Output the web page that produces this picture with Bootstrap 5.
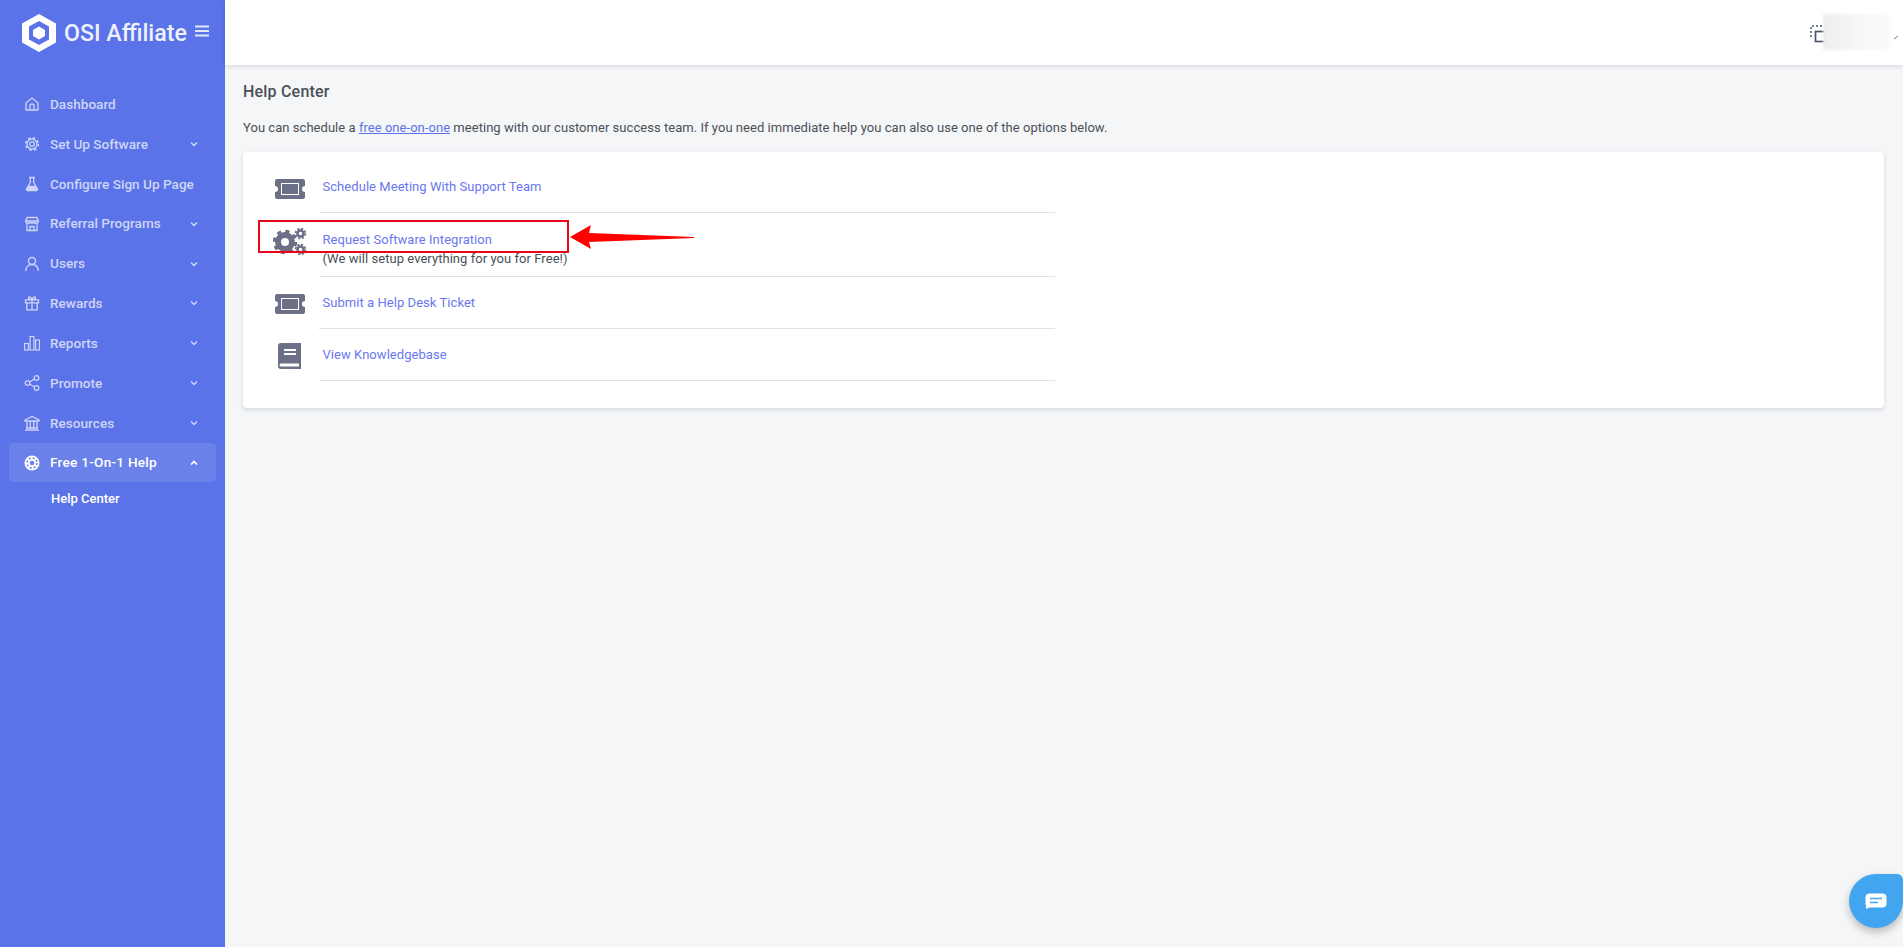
<!DOCTYPE html>
<html lang="en">
<head>
<meta charset="utf-8">
<title>Help Center</title>
<link href="https://cdn.jsdelivr.net/npm/bootstrap@5.3.0/dist/css/bootstrap.min.css" rel="stylesheet">
<style>
html,body{height:100%}
body{font-family:Roboto,"Liberation Sans",sans-serif;font-size:13px;color:#495057;background:#f5f6f8;overflow:hidden}
.app-shell{height:947px}
.side-rail{width:225px;flex:0 0 225px;background:#5b73e8;color:#c9d1f8}
.brand-zone{height:65px;padding-left:22px;color:#fff;gap:8px}
.brand-name{font-size:23.2px;font-weight:500;color:#eef0fd;line-height:1;white-space:nowrap;padding-top:2px}
.burger-btn{margin:0 0 3px 0;width:14px;height:12px;flex:none;color:#e3e7fb}
.menu-list{padding-top:19px}
.menu-row{height:39.9px;padding:0 26px 0 24px;margin:0;color:#ced5f8;font-size:13.6px;font-weight:500;text-decoration:none}
.menu-row svg.mi{width:16px;height:16px;margin-right:10px;flex:none}
.menu-row .chev{width:10px;height:10px;flex:none;margin-left:auto}
.menu-row.is-open{height:39px;margin:0 9px;padding:0 17px 0 15px;background:rgba(255,255,255,.1);border-radius:4px;color:#fff;letter-spacing:.25px}
.sub-row{display:block;padding:7px 0 0 51px;color:#fff;font-size:13px;font-weight:500;line-height:20px;text-decoration:none}
.top-strip{height:65px;background:#fff;box-shadow:0 2px 4px rgba(15,34,58,.12)}
.select-ico{width:16px;height:18px;margin:2px -3px 0 0}
.blur-box{position:relative;width:68px;height:36px;margin-top:-1px;background:linear-gradient(90deg,#ededef,#f8f8f9 60%,#fbfbfb);filter:blur(1px)}
.mini-chev{width:7px;height:7px;margin:10px 3px 0 2px}
.page-zone{padding:0 19px 0 18px;position:relative}
.page-head{font-size:16px;font-weight:500;margin:17px 0 0;line-height:19px;letter-spacing:.2px;color:#495057}
.page-lead{margin:17px 0 14px;line-height:20px;color:#495057;letter-spacing:.04px}
.page-lead a{color:#5b73e8}
.panel-box{border:0;border-radius:4px;box-shadow:0 2px 4px rgba(15,34,58,.14);padding:9px 0 26px;height:256px}
.help-list{width:812px;list-style:none;margin:0;padding:0}
.help-item{height:52px}
.help-item.tall{height:64px}
.ico-cell{width:76px;flex:0 0 76px;padding-top:18px}
.ico-cell svg{display:block;margin:0 auto 0 32px}
.ico-cell.gear-cell{padding-top:15px}
.ico-cell.gear-cell svg{margin-left:30px}
.ico-cell.ticket-cell{padding-top:17px}
.ico-cell.book-cell{padding-top:14px}
.ico-cell.book-cell svg{margin-left:29px}
.txt-cell{width:736px;border-bottom:1px solid #dfe1e4;padding:16px 0 0 3.5px;line-height:20px;letter-spacing:.05px}
.tall .txt-cell{padding-top:17px;line-height:19px}
.txt-cell a{color:#6a77ee;text-decoration:none}
.mark-frame{position:absolute;left:258px;top:220px;width:311px;height:33px;border:2px solid #e8071a;pointer-events:none}
.mark-arrow{position:absolute;left:569px;top:222px;width:126px;height:30px}
.chat-fab{position:fixed;right:0;bottom:19px;width:54px;height:54px;background:#42a5ef;border-radius:50% 6px 50% 50%;box-shadow:0 4px 8px rgba(0,0,0,.25)}
</style>
</head>
<body>
<div class="app-shell d-flex">
  <aside class="side-rail d-flex flex-column">
    <div class="brand-zone d-flex align-items-center">
      <svg width="34" height="38" viewBox="0 0 34 38" class="flex-none"><path fill="#fff" fill-rule="evenodd" d="M17 0 34 9.5V28.500L17 38 0 28.500V9.500ZM17 7 7 12.500V25.500L17 31 27 25.500V12.500Z"/><path fill="#fff" d="M17 12.500 23 16V22L17 25.500 11 22V16Z"/></svg>
      <span class="brand-name">OSI Affiliate</span>
      <svg class="burger-btn" viewBox="0 0 14 12"><path stroke="currentColor" stroke-width="2" d="M0 1.500H14M0 6H14M0 10.500H14"/></svg>
    </div>
    <nav class="menu-list nav flex-column flex-nowrap">
      <a class="menu-row d-flex align-items-center" href="#"><svg class="mi" viewBox="0 0 16 16" fill="none" stroke="currentColor" stroke-width="1.300"><path d="M2 7 8 2l6 5v7H2ZM6 14v-4a2 2 0 0 1 4 0v4"/></svg>Dashboard</a>
      <a class="menu-row d-flex align-items-center" href="#"><svg class="mi" viewBox="0 0 16 16" fill="none" stroke="currentColor"><circle cx="8" cy="8" r="2.300" stroke-width="1.300"/><circle cx="8" cy="8" r="5" stroke-width="1.300"/><circle cx="8" cy="8" r="6.300" stroke-width="1.600" stroke-dasharray="2.500 2.450"/></svg>Set Up Software<svg class="chev" viewBox="0 0 10 10" fill="none" stroke="currentColor" stroke-width="1.500"><path d="m2 3.500 3 3 3-3"/></svg></a>
      <a class="menu-row d-flex align-items-center" href="#"><svg class="mi" viewBox="0 0 16 16" fill="none" stroke="currentColor" stroke-width="1.300"><path d="M5 1.500h6M6.300 1.500v5L2.500 13a1 1 0 0 0 1 1.500h9a1 1 0 0 0 1-1.500L9.700 6.500v-5"/><path fill="currentColor" d="M4.500 10.500h7l1 3h-9Z"/></svg>Configure Sign Up Page</a>
      <a class="menu-row d-flex align-items-center" href="#"><svg class="mi" viewBox="0 0 16 16" fill="none" stroke="currentColor" stroke-width="1.300"><path d="M3 1.500h10l1.500 4a2 2 0 0 1-3.500 1 2 2 0 0 1-3 0 2 2 0 0 1-3 0 2 2 0 0 1-3.500-1ZM3 7.500v7h10v-7M6 14.500v-4h4v4M1.500 5h13"/></svg>Referral Programs<svg class="chev" viewBox="0 0 10 10" fill="none" stroke="currentColor" stroke-width="1.500"><path d="m2 3.500 3 3 3-3"/></svg></a>
      <a class="menu-row d-flex align-items-center" href="#"><svg class="mi" viewBox="0 0 16 16" fill="none" stroke="currentColor" stroke-width="1.400"><circle cx="8" cy="5" r="3.500"/><path d="M1.800 15c0-4 2.500-6.500 6.200-6.500s6.200 2.500 6.200 6.500"/></svg>Users<svg class="chev" viewBox="0 0 10 10" fill="none" stroke="currentColor" stroke-width="1.500"><path d="m2 3.500 3 3 3-3"/></svg></a>
      <a class="menu-row d-flex align-items-center" href="#"><svg class="mi" viewBox="0 0 16 16" fill="none" stroke="currentColor" stroke-width="1.300"><path d="M1.500 4.800h13v3h-13ZM2.800 7.800v7h10.400v-7M8 4.800v10M8 4.800C6 4.800 4.500 4 4.500 2.800S6.800.8 8 4.800Zm0 0c2 0 3.500-.8 3.500-2S9.200.8 8 4.800Z"/></svg>Rewards<svg class="chev" viewBox="0 0 10 10" fill="none" stroke="currentColor" stroke-width="1.500"><path d="m2 3.500 3 3 3-3"/></svg></a>
      <a class="menu-row d-flex align-items-center" href="#"><svg class="mi" viewBox="0 0 16 16" fill="none" stroke="currentColor" stroke-width="1.200"><rect x=".6" y="8.500" width="3.800" height="6.500"/><rect x="6.100" y="1.500" width="3.800" height="13.500"/><rect x="11.600" y="5" width="3.800" height="10"/></svg>Reports<svg class="chev" viewBox="0 0 10 10" fill="none" stroke="currentColor" stroke-width="1.500"><path d="m2 3.500 3 3 3-3"/></svg></a>
      <a class="menu-row d-flex align-items-center" href="#"><svg class="mi" viewBox="0 0 16 16" fill="none" stroke="currentColor" stroke-width="1.300"><circle cx="3.500" cy="8" r="2.300"/><circle cx="12.500" cy="3" r="2.300"/><circle cx="12.500" cy="13" r="2.300"/><path d="m5.500 7 5-3M5.500 9l5 3"/></svg>Promote<svg class="chev" viewBox="0 0 10 10" fill="none" stroke="currentColor" stroke-width="1.500"><path d="m2 3.500 3 3 3-3"/></svg></a>
      <a class="menu-row d-flex align-items-center" href="#"><svg class="mi" viewBox="0 0 16 16" fill="none" stroke="currentColor" stroke-width="1.300"><path d="M1 5 8 1.500 15 5v1H1ZM3 6.500v6M6.300 6.500v6M9.700 6.500v6M13 6.500v6M2 13h12M1 15h14"/></svg>Resources<svg class="chev" viewBox="0 0 10 10" fill="none" stroke="currentColor" stroke-width="1.500"><path d="m2 3.500 3 3 3-3"/></svg></a>
      <a class="menu-row is-open d-flex align-items-center" href="#"><svg class="mi" viewBox="0 0 16 16"><circle cx="8" cy="8" r="7.500" fill="#fff"/><circle cx="8" cy="8" r="2.300" fill="#6b81eb"/><circle cx="8" cy="8" r="5" fill="none" stroke="#6b81eb" stroke-width="1.500" stroke-dasharray="2 1.930"/></svg>Free 1-On-1 Help<svg class="chev" viewBox="0 0 10 10" fill="none" stroke="currentColor" stroke-width="1.700"><path d="m2 6.500 3-3 3 3"/></svg></a>
      <a class="sub-row" href="#">Help Center</a>
    </nav>
  </aside>
  <div class="flex-grow-1 d-flex flex-column">
    <header class="top-strip d-flex justify-content-end align-items-center">
      <svg class="select-ico" viewBox="0 0 16 18" fill="none" stroke="#495670"><path stroke-width="1.500" stroke-dasharray="2 2" d="M1 12V1h12"/><rect x="5.500" y="6.500" width="10" height="10" stroke-width="1.700"/></svg>
      <div class="blur-box"></div>
      <svg class="mini-chev" viewBox="0 0 7 7" fill="none" stroke="#777" stroke-width="1"><path d="m1 5 4-3"/></svg>
    </header>
    <main class="page-zone flex-grow-1">
      <h1 class="page-head">Help Center</h1>
      <p class="page-lead">You can schedule a <a href="#">free one-on-one</a> meeting with our customer success team. If you need immediate help you can also use one of the options below.</p>
      <section class="card panel-box">
        <ul class="help-list">
          <li class="help-item d-flex">
            <div class="ico-cell"><svg width="30" height="20" viewBox="0 0 30 20"><path fill="#6c7086" fill-rule="evenodd" d="M2 0H28a2 2 0 0 1 2 2V7a3 3 0 0 0 0 6v5a2 2 0 0 1-2 2H2a2 2 0 0 1-2-2V13a3 3 0 0 0 0-6V2A2 2 0 0 1 2 0ZM6 4V16H24V4Z"/><rect x="7" y="5" width="16" height="10" fill="#6c7086"/></svg></div>
            <div class="txt-cell"><a href="#">Schedule Meeting With Support Team</a></div>
          </li>
          <li class="help-item tall d-flex">
            <div class="ico-cell gear-cell"><svg width="34" height="27" viewBox="0 0 34 27" fill="none" stroke="#6c7086"><circle cx="12" cy="14" r="7" stroke-width="6"/><circle cx="12" cy="14" r="10.500" stroke-width="3.500" stroke-dasharray="4.100 4.150"/><circle cx="27.500" cy="5.500" r="3" stroke-width="2.500"/><circle cx="27.500" cy="5.500" r="4.800" stroke-width="2" stroke-dasharray="2.100 1.670"/><circle cx="27.500" cy="21.500" r="3" stroke-width="2.500"/><circle cx="27.500" cy="21.500" r="4.800" stroke-width="2" stroke-dasharray="2.100 1.670"/></svg></div>
            <div class="txt-cell"><a href="#">Request Software Integration</a><br>(We will setup everything for you for Free!)</div>
          </li>
          <li class="help-item d-flex">
            <div class="ico-cell ticket-cell"><svg width="30" height="20" viewBox="0 0 30 20"><path fill="#6c7086" fill-rule="evenodd" d="M2 0H28a2 2 0 0 1 2 2V7a3 3 0 0 0 0 6v5a2 2 0 0 1-2 2H2a2 2 0 0 1-2-2V13a3 3 0 0 0 0-6V2A2 2 0 0 1 2 0ZM6 4V16H24V4Z"/><rect x="7" y="5" width="16" height="10" fill="#6c7086"/></svg></div>
            <div class="txt-cell"><a href="#">Submit a Help Desk Ticket</a></div>
          </li>
          <li class="help-item d-flex">
            <div class="ico-cell book-cell"><svg width="34" height="26" viewBox="0 0 34 26"><path fill="#6c7086" fill-rule="evenodd" d="M9 0H29V26H9a3 3 0 0 1-3-3V3A3 3 0 0 1 9 0ZM12 6V8H24V6ZM12 10V12H24V10ZM9 20.500a1.500 1.500 0 0 0 0 3H27V20.500Z"/></svg></div>
            <div class="txt-cell"><a href="#">View Knowledgebase</a></div>
          </li>
        </ul>
      </section>
    </main>
  </div>
</div>
<div class="mark-frame"></div>
<svg class="mark-arrow" viewBox="0 0 126 30"><path fill="#f00" d="M1 15 22 3 20 11 125 15 125 16 20 20 22 27Z"/></svg>
<div class="chat-fab d-flex align-items-center justify-content-center"><svg width="22" height="16" viewBox="0 0 22 16"><rect width="21" height="14" x=".5" y=".5" rx="4" fill="#fff"/><path fill="#fff" d="M1 10v6l6-3Z"/><path stroke="#42a5ef" stroke-width="1.500" d="M5 5.500H17M5 9.500H13"/></svg></div>
<script src="https://cdn.jsdelivr.net/npm/bootstrap@5.3.0/dist/js/bootstrap.bundle.min.js"></script>
</body>
</html>
